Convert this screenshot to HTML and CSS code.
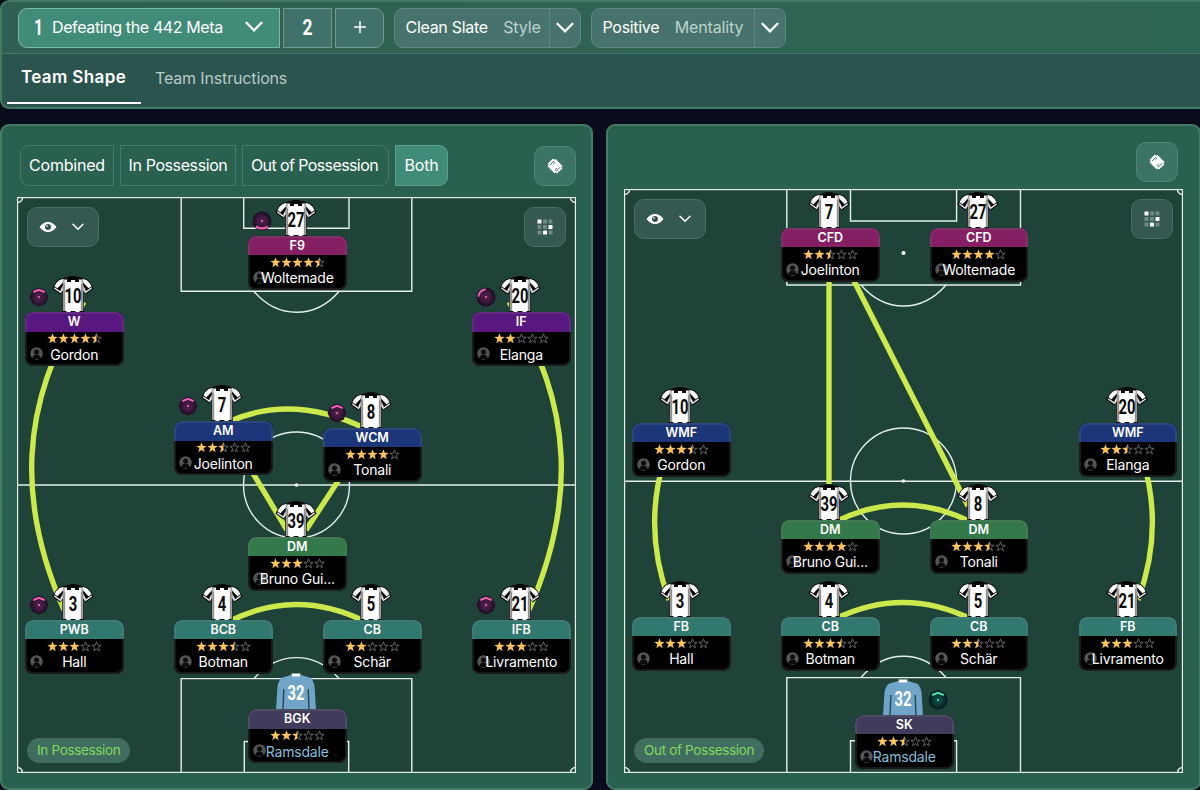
FILE: index.html
```html
<!DOCTYPE html>
<html lang="en">
<head>
  <meta charset="utf-8">
  <title>Team Shape</title>
  <link rel="stylesheet" href="styles.css">
</head>
<body>

<svg class="defs" width="0" height="0" aria-hidden="true">
  <defs>
    <linearGradient id="shade" x1="0" x2="1" y1="0" y2="0">
      <stop offset="0" stop-color="#8d8d8d"/>
      <stop offset=".16" stop-color="#fff"/>
      <stop offset=".84" stop-color="#fff"/>
      <stop offset="1" stop-color="#8d8d8d"/>
    </linearGradient>
    <radialGradient id="duty-pink">
      <stop offset="0" stop-color="#5a2150"/>
      <stop offset=".6" stop-color="#38173a"/>
      <stop offset="1" stop-color="#170c20"/>
    </radialGradient>
    <radialGradient id="duty-green">
      <stop offset="0" stop-color="#12594d"/>
      <stop offset=".6" stop-color="#0b3431"/>
      <stop offset="1" stop-color="#061c1d"/>
    </radialGradient>
    <clipPath id="left-half"><rect width="5.5" height="11"/></clipPath>
  </defs>

  <symbol id="chevron" viewBox="0 0 18 12">
    <path d="M1.5 1.8 9 9.3l7.500-7.500" fill="none" stroke="currentColor" stroke-width="2.300" stroke-linecap="round"/>
  </symbol>

  <symbol id="eye" viewBox="0 0 18 12">
    <path d="M.5 6C3 2.500 5.800 1 9 1s6 1.500 8.500 5C15 9.500 12.200 11 9 11S3 9.500.5 6Z" fill="#fff"/>
    <circle cx="9" cy="6" r="3" fill="#35564f"/>
    <circle cx="8" cy="5" r="1" fill="#b9c8c5"/>
  </symbol>

  <symbol id="grid" viewBox="0 0 16 16">
    <g fill="#6f8a84">
      <rect x="6" y=".5" width="4" height="4" rx=".7"/><rect x="11.500" y=".5" width="4" height="4" rx=".7"/>
      <rect x=".5" y="6" width="4" height="4" rx=".7"/><rect x="6" y="6" width="4" height="4" rx=".7"/>
      <rect x=".5" y="11.500" width="4" height="4" rx=".7"/><rect x="11.500" y="11.500" width="4" height="4" rx=".7"/>
    </g>
    <g fill="#fff">
      <rect x=".5" y=".5" width="4" height="4" rx=".5"/><rect x="11.500" y="6" width="4" height="4" rx=".5"/><rect x="6" y="11.500" width="4" height="4" rx=".5"/>
    </g>
  </symbol>

  <symbol id="ticket" viewBox="0 0 16 16">
    <path d="M6 .6 7.200 1.800 8.600 1l6.900 7-1 1.200.9 1.400L10 15.600l-1.300-1.200-1.300.8L.5 8.200l1.200-1.300L.6 5.700Z" fill="#fff"/>
    <path d="M3 7 6.700 3.300l1.200 1.200-1.700 1.700M13.200 9.200 9.500 12.900 8.200 11.600l1.700-1.700" fill="none" stroke="#3b7365" stroke-width="1"/>
  </symbol>

  <symbol id="person" viewBox="0 0 13 13">
    <circle cx="6.500" cy="6.500" r="6.200" fill="#555"/>
    <circle cx="6.500" cy="5" r="2.500" fill="#0c0c0c"/>
    <path d="M2.300 12c.2-3 1.800-4.400 4.200-4.400s4 1.400 4.200 4.400Z" fill="#0c0c0c"/>
  </symbol>

  <symbol id="star-on" viewBox="0 0 11 11">
    <path d="m5.500.2 1.300 3.600 3.900.1-3.100 2.400 1.100 3.900-3.200-2.200-3.200 2.200 1.100-3.900L.3 3.900l3.900-.1Z" fill="#fcc45a"/>
  </symbol>
  <symbol id="star-off" viewBox="0 0 11 11">
    <path d="m5.500.8 1.200 3.400 3.500.1-2.800 2.100 1 3.400-2.900-2-2.900 2 1-3.400L.8 4.300l3.500-.1Z" fill="none" stroke="#77777d" stroke-width=".8"/>
  </symbol>
  <symbol id="star-half" viewBox="0 0 11 11">
    <use href="#star-off"/>
    <use href="#star-on" clip-path="url(#left-half)"/>
  </symbol>

  <symbol id="shirt" viewBox="0 0 42 37">
    <path d="M15 1 6.500 3.500Q4 5.500.4 12.500l7.800 6 2-2.800V37h21.600V15.700l2 2.800 7.800-6Q38 5.500 35.500 3.500L27 1Q21-.5 15 1Z" fill="#0c0c0c"/>
    <path d="M11.500 2.800 7.200 4.200Q4.600 6 2.500 10.200l3 2.100 6-6.500ZM30.500 2.800l4.300 1.400q2.600 1.800 4.700 6l-3 2.100-6-6.500Z" fill="#fff"/>
    <path d="M8.400 14.300 10.800 9.500v4.700L8.600 17.300 2 12.500l.6-1.300 5.800 4.200ZM33.600 14.300 31.200 9.500v4.700l2.200 3.100 6.600-4.800-.6-1.300-5.800 4.200Z" fill="#f1f1f1"/>
    <path d="M10.800 3.500H15V6h4V4h4v2h4V3.500h4.200V35H27.500v1.500h-4V35h-5v1.500h-4V35h-3.700Z" fill="url(#shade)"/>
    <path d="M16.500 1q4.500-1.500 9 0l-2 2.700h-5Z" fill="#000"/>
    <path d="M12.300 8v27M29.700 8v27" stroke="#666" stroke-width=".7"/>
  </symbol>

  <symbol id="shirt-gk" viewBox="0 0 42 37">
    <path d="M16 2 7.500 4.500Q4 6 2.500 13L1 37h40l-1.500-24Q38 6 34.500 4.500L26 2Z" fill="#70a5c8"/>
    <path d="M8.800 16 8 37M33.200 16 34 37" stroke="#244551" stroke-width="1.400"/>
    <path d="M16.500.5h9l-.5 3h-8Z" fill="#fff"/>
  </symbol>

  <symbol id="duty-support" viewBox="0 0 20 20">
    <path d="m10 .5 6.500 2.700 2.900 6.800-2.900 6.800L10 19.500l-6.500-2.700L.6 10l2.900-6.800Z" fill="url(#duty-pink)"/>
    <path d="M5 4.800 10 2.900l5 1.900" fill="none" stroke="#ee62b0" stroke-width="2" stroke-linecap="round"/>
    <circle cx="10" cy="10" r="1" fill="#f176bb"/>
  </symbol>
  <symbol id="duty-deep" viewBox="0 0 20 20">
    <circle cx="10" cy="10" r="9.500" fill="url(#duty-pink)"/>
    <path d="M4.800 16q5.200 2.800 10.400 0" fill="none" stroke="#ee62b0" stroke-width="2.200" stroke-linecap="round"/>
    <circle cx="10" cy="10" r="1" fill="#f176bb"/>
  </symbol>
  <symbol id="duty-inside" viewBox="0 0 20 20">
    <circle cx="10" cy="10" r="9.500" fill="url(#duty-pink)"/>
    <path d="M2.500 9Q3.500 3.500 9 2.500" fill="none" stroke="#ee62b0" stroke-width="1.800" stroke-linecap="round"/>
    <circle cx="10" cy="10" r="1" fill="#f176bb"/>
  </symbol>
  <symbol id="duty-keeper" viewBox="0 0 20 20">
    <circle cx="10" cy="10" r="9.500" fill="url(#duty-green)"/>
    <path d="M5 4.800 10 2.800l5 2" fill="none" stroke="#4ee0ac" stroke-width="2" stroke-linecap="round"/>
    <circle cx="10" cy="10" r="1" fill="#5fe3b8"/>
  </symbol>
</svg>

<header class="topbar">
  <div class="tactics">
    <div class="slots">
      <button class="slot slot-active">
        <svg class="slot-num" width="12" height="34"><text x="1" y="24.500" textLength="9" lengthAdjust="spacingAndGlyphs">1</text></svg>
        <span class="slot-name">Defeating the 442 Meta</span>
        <svg class="chevron"><use href="#chevron"/></svg>
      </button>
      <button class="slot slot-two">
        <svg class="slot-num" width="14" height="34"><text x="1.500" y="24.500" textLength="10" lengthAdjust="spacingAndGlyphs">2</text></svg>
      </button>
      <button class="slot slot-add">
        <svg width="12" height="12" viewBox="0 0 12 12"><path d="M6 0v12M0 6h12" stroke="#fff" stroke-width="1.500"/></svg>
      </button>
    </div>
    <button class="picker picker-style">
      <span class="picker-value">Clean Slate</span>
      <span class="picker-label">Style</span>
      <span class="picker-arrow"><svg class="chevron"><use href="#chevron"/></svg></span>
    </button>
    <button class="picker picker-mentality">
      <span class="picker-value">Positive</span>
      <span class="picker-label">Mentality</span>
      <span class="picker-arrow"><svg class="chevron"><use href="#chevron"/></svg></span>
    </button>
  </div>
  <nav class="tabs">
    <a class="tab tab-active">Team Shape</a>
    <a class="tab">Team Instructions</a>
  </nav>
</header>

<main class="panels">
  <section class="panel">
    <div class="panel-head">
      <div class="views">
        <button class="view view-combined">Combined</button>
        <button class="view view-in">In Possession</button>
        <button class="view view-out">Out of Possession</button>
        <button class="view view-both">Both</button>
      </div>
      <button class="square"><svg width="16" height="16"><use href="#ticket"/></svg></button>
    </div>
    <div class="pitch pitch-in" id="in-possession">
      <svg class="lines" viewBox="17 197 559 576">
        <g class="markings">
          <rect x="17.500" y="197.500" width="558" height="575"/>
          <path d="M17 485H576M181.200 197V291.200H411.800V197M243.700 197V228.300H349V197M181.200 773V678.600H411.800V773M244.300 773V741.500H348.700V773"/>
          <circle cx="296.500" cy="485" r="53"/>
          <path d="M254 291.500Q272 312.300 296.500 312.300T339 291.500M254 678.500Q272 657.600 296.500 657.600T339 678.500"/>
          <path d="M22.500 197.500a5 5 0 0 1-5 5M570.500 197.500a5 5 0 0 0 5 5M17.500 767.500a5 5 0 0 1 5 5M575.500 767.500a5 5 0 0 0-5 5"/>
        </g>
        <circle cx="296.500" cy="485" r="1.800" fill="#fff"/>
        <g class="links">
          <path d="M84 302C18 405 18 505 64 610M509 302C575 405 575 505 529 610"/>
          <path d="M228 422Q293 393 366 429M251 470 287 530M344 472 306 530M228 622Q296 587 366 622"/>
        </g>
      </svg>
      <button class="eye-menu"><svg width="18" height="12"><use href="#eye"/></svg><svg class="chevron-sm"><use href="#chevron"/></svg></button>
      <button class="square grid-menu"><svg width="16" height="16"><use href="#grid"/></svg></button>
      <span class="phase">In Possession</span>
    </div>
  </section>

  <section class="panel">
    <div class="panel-head panel-head-out">
      <button class="square"><svg width="16" height="16"><use href="#ticket"/></svg></button>
    </div>
    <div class="pitch pitch-out" id="out-of-possession">
      <svg class="lines" viewBox="624 189 559 584">
        <g class="markings">
          <rect x="624.500" y="189.500" width="558" height="583"/>
          <path d="M624 481.200H1183M786.800 189V285H1020.500V189M850.500 189V221H956.600V189M786.800 773V677.600H1020.500V773M850.500 773V740.700H956.600V773"/>
          <circle cx="903.500" cy="481" r="53"/>
          <path d="M861 285Q879 306 903.500 306T946 285M861 677.500Q879 656.200 903.500 656.200T946 677.500"/>
          <path d="M629.500 189.500a5 5 0 0 1-5 5M1177.500 189.500a5 5 0 0 0 5 5M624.500 767.500a5 5 0 0 1 5 5M1182.500 767.500a5 5 0 0 0-5 5"/>
        </g>
        <circle cx="903.500" cy="481" r="1.800" fill="#fff"/>
        <circle cx="903.500" cy="253" r="2" fill="#fff"/>
        <g class="links">
          <path d="M829 275V490M851 275 968 506"/>
          <path d="M664 460Q643 530 669 600M1143 460Q1164 530 1138 600"/>
          <path d="M835 522Q903 488 971 522M835 619Q903 586 971 619"/>
        </g>
      </svg>
      <button class="eye-menu"><svg width="18" height="12"><use href="#eye"/></svg><svg class="chevron-sm"><use href="#chevron"/></svg></button>
      <button class="square grid-menu"><svg width="16" height="16"><use href="#grid"/></svg></button>
      <span class="phase">Out of Possession</span>
    </div>
  </section>
</main>

<script src="script.js"></script>
</body>
</html>
```
FILE: styles.css
```css
* {
    box-sizing: border-box;
}

body {
    margin: 0;
    height: 790px;
    overflow: hidden;
    background: #090c1b;
    color: #fff;
    font: 16px/20px Inter, "Liberation Sans", sans-serif;
}

button {
    margin: 0;
    padding: 0;
    border: 1.5px solid #5b897d;
    background: #41726a;
    color: inherit;
    font: inherit;
    display: flex;
    align-items: center;
    justify-content: center;
    white-space: nowrap;
}

svg {
    display: block;
    flex: none;
}

.defs {
    position: absolute;
}

/* top bar */

.topbar {
    height: 109px;
    border: 2px solid #437a63;
    border-right: 0;
    border-radius: 9px 0 0 9px;
    background: #2b544e;
    overflow: hidden;
}

.tactics {
    display: flex;
    gap: 10px;
    height: 52px;
    padding: 6px 16px 0;
    border-bottom: 1px solid #42776a;
    background: linear-gradient(90deg, #306053, #2f6554);
}

.slots {
    display: flex;
    gap: 3px;
}

.slot,
.picker {
    height: 40px;
    padding-bottom: 2px;
}

.slot-active {
    width: 262px;
    padding: 0 16px 2px 14px;
    justify-content: flex-start;
    border-color: #7bb5a3;
    border-radius: 9px 0 0 9px;
    background: #418b79;
}

.slot-num {
    font: bold 22px Roboto, sans-serif;
    fill: #fff;
    overflow: visible;
}

.slot-name {
    margin-left: 7px;
    flex: 1;
    text-align: left;
    letter-spacing: -.38px;
}

.slot-two {
    width: 49px;
    border-color: #72998f;
}

.slot-add {
    width: 49px;
    border-color: #72998f;
    border-radius: 0 9px 9px 0;
}

.chevron {
    width: 18px;
    height: 12px;
}

.chevron-sm {
    width: 12px;
    height: 8px;
}

.picker {
    justify-content: flex-start;
    border-radius: 9px;
    background: #48736c;
    padding: 0 0 0 10.5px;
}

.picker-style {
    width: 187px;
}

.picker-mentality {
    width: 195px;
}

.picker-value {
    padding-bottom: 2px;
    letter-spacing: -.3px;
}

.picker-label {
    margin-left: 15.5px;
    padding-bottom: 2px;
    color: #bcd3cf;
    letter-spacing: -.15px;
}

.picker-arrow {
    width: 31px;
    height: 100%;
    margin-left: auto;
    padding: 0 1px 1px 0;
    display: flex;
    align-items: center;
    justify-content: center;
    border-left: 1px solid #5b897d;
}

.tabs {
    display: flex;
    height: 50px;
    padding-left: 5px;
}

.tab {
    padding: 13px 14px 0;
    color: #b7cbc8;
    line-height: 22px;
    letter-spacing: -.15px;
}

.tab-active {
    width: 134px;
    padding-top: 12px;
    padding-right: 0;
    border-bottom: 2px solid #fff;
    color: #fff;
    font-size: 17px;
    font-weight: 600;
    letter-spacing: .38px;
    white-space: nowrap;
}

/* panels */

.panels {
    display: grid;
    grid-template-columns: 593px 595px;
    gap: 13px;
    margin-top: 15px;
}

.panel {
    height: 666px;
    padding: 0 15px;
    border: 2px solid #457c64;
    border-radius: 9px;
    background: #296050;
}

.panel-head {
    display: flex;
    align-items: center;
    justify-content: space-between;
    height: 71px;
    padding: 8px 0 0 3px;
}

.panel-head-out {
    height: 63px;
    padding-top: 8px;
    padding-right: 6px;
    justify-content: flex-end;
}

.views {
    display: flex;
    gap: 6px;
}

.view {
    height: 41px;
    padding-bottom: 1px;
    border-color: #447c69;
    background: none;
    letter-spacing: -.2px;
}

.view-combined {
    width: 94px;
    border-radius: 9px 0 0 9px;
}

.view-in {
    width: 116px;
    letter-spacing: -.4px;
}

.view-out {
    width: 147px;
    padding-right: 2px;
    border-radius: 0 9px 9px 0;
    letter-spacing: -.6px;
}

.view-both {
    width: 53px;
    border-color: #5aa08c;
    border-radius: 0 9px 9px 0;
    background: #418b79;
}

.square {
    width: 42px;
    height: 40px;
    border-color: #4d8676;
    border-radius: 10px;
    background: #3b7365;
}

/* pitch */

.pitch {
    position: relative;
    width: 559px;
    background: #1f4239;
}

.pitch-in {
    height: 576px;
}

.pitch-out {
    height: 584px;
    margin-left: 1px;
}

.lines {
    width: 100%;
    height: 100%;
}

.markings {
    fill: none;
    stroke: #e3f0ea;
    stroke-width: 1.4;
}

.links {
    fill: none;
    stroke: #cbe94c;
    stroke-width: 5.4;
}

.eye-menu {
    position: absolute;
    left: 10px;
    top: 10px;
    width: 72px;
    height: 40px;
    gap: 15px;
    padding: 0 4px 1px 0;
    border-color: #4b6d67;
    border-radius: 10px;
    background: #355851;
}

.grid-menu {
    position: absolute;
    right: 10px;
    top: 10px;
    border-color: #4b6d67;
    background: #355851;
}

.phase {
    position: absolute;
    left: 10px;
    bottom: 10px;
    height: 25px;
    padding: 0 10px;
    border-radius: 13px;
    background: #416d60;
    color: #82da5b;
    font-size: 13.5px;
    line-height: 25px;
    letter-spacing: -.33px;
}

/* players */

.player {
    position: absolute;
    width: 98.5px;
}

.shirt {
    position: absolute;
    left: 27px;
    top: -36px;
    width: 42px;
    height: 37px;
}

.shirt text {
    font: bold 20px Roboto, sans-serif;
    fill: #0a0a0a;
}

.keeper .shirt text {
    fill: #fff;
}

.duty {
    position: absolute;
    left: 3.5px;
    top: -25px;
    width: 20px;
    height: 20px;
}

.keeper .duty {
    left: 73px;
}

.card {
    position: relative;
    height: 54px;
    border-radius: 8px;
    background: #000;
    overflow: hidden;
}

.card::after {
    content: "";
    position: absolute;
    inset: 0;
    border: 2.5px solid rgba(130, 130, 130, .2);
    border-radius: 8px;
}

.role {
    height: 19.5px;
    font-size: 12.5px;
    font-weight: 600;
    line-height: 20px;
    text-align: center;
}

.role-striker { background: #831f62; }
.role-winger { background: #591780; }
.role-midfield { background: #1b3779; }
.role-holding { background: #34794a; }
.role-defence { background: #31786e; }
.role-keeper { background: #413c5b; }

.stars {
    display: flex;
    justify-content: center;
    height: 14px;
    align-items: center;
}

.stars svg {
    width: 11px;
    height: 11px;
}

.person {
    position: absolute;
    left: 5px;
    top: 35px;
    width: 13px;
    height: 13px;
}

.name {
    position: relative;
    font-size: 14px;
    line-height: 18px;
    letter-spacing: -.2px;
    text-align: center;
}

.keeper .name {
    color: #86bfdd;
}
```
FILE: script.js
```js
// x and y are the top left corner of the card on its pitch
const inPossession = [
  {x: 231, y: 38.5, number: 27, role: 'F9', line: 'striker', stars: 4.5, name: 'Woltemade', duty: 'deep'},
  {x: 8, y: 115, number: 10, role: 'W', line: 'winger', stars: 4.5, name: 'Gordon', duty: 'support'},
  {x: 455, y: 115, number: 20, role: 'IF', line: 'winger', stars: 2, name: 'Elanga', duty: 'inside'},
  {x: 157, y: 224, number: 7, role: 'AM', line: 'midfield', stars: 2.5, name: 'Joelinton', duty: 'support'},
  {x: 306, y: 230.5, number: 8, role: 'WCM', line: 'midfield', stars: 4, name: 'Tonali', duty: 'support'},
  {x: 231, y: 339.5, number: 39, role: 'DM', line: 'holding', stars: 3, name: 'Bruno Gui...'},
  {x: 8, y: 422.5, number: 3, role: 'PWB', line: 'defence', stars: 3, name: 'Hall', duty: 'support'},
  {x: 157, y: 422.5, number: 4, role: 'BCB', line: 'defence', stars: 3.5, name: 'Botman'},
  {x: 306, y: 422.5, number: 5, role: 'CB', line: 'defence', stars: 2, name: 'Schär'},
  {x: 455, y: 422.5, number: 21, role: 'IFB', line: 'defence', stars: 3, name: 'Livramento', duty: 'support'},
  {x: 231, y: 512, number: 32, role: 'BGK', line: 'keeper', stars: 2.5, name: 'Ramsdale'},
]

const outOfPossession = [
  {x: 157, y: 38.5, number: 7, role: 'CFD', line: 'striker', stars: 2.5, name: 'Joelinton'},
  {x: 305.5, y: 38.5, number: 27, role: 'CFD', line: 'striker', stars: 4, name: 'Woltemade'},
  {x: 8, y: 233.5, number: 10, role: 'WMF', line: 'midfield', stars: 3.5, name: 'Gordon'},
  {x: 454.5, y: 233.5, number: 20, role: 'WMF', line: 'midfield', stars: 2.5, name: 'Elanga'},
  {x: 157, y: 330.5, number: 39, role: 'DM', line: 'holding', stars: 4, name: 'Bruno Gui...'},
  {x: 305.5, y: 330.5, number: 8, role: 'DM', line: 'holding', stars: 3.5, name: 'Tonali'},
  {x: 8, y: 427.5, number: 3, role: 'FB', line: 'defence', stars: 3, name: 'Hall'},
  {x: 157, y: 427.5, number: 4, role: 'CB', line: 'defence', stars: 3.5, name: 'Botman'},
  {x: 305.5, y: 427.5, number: 5, role: 'CB', line: 'defence', stars: 2.5, name: 'Schär'},
  {x: 454.5, y: 427.5, number: 21, role: 'FB', line: 'defence', stars: 3, name: 'Livramento'},
  {x: 231, y: 525.5, number: 32, role: 'SK', line: 'keeper', stars: 2.5, name: 'Ramsdale', duty: 'keeper'},
]

function stars(rating) {
  let html = ''
  for (let i = 1; i <= 5; i++) {
    const kind = rating >= i ? 'on' : rating > i - 1 ? 'half' : 'off'
    html += `<svg><use href="#star-${kind}"/></svg>`
  }
  return html
}

function player(p) {
  const keeper = p.line === 'keeper'
  const width = p.number > 9 ? 17 : 8.5
  return `
    <div class="player ${keeper ? 'keeper' : ''}" style="left: ${p.x}px; top: ${p.y}px">
      <svg class="shirt" viewBox="0 0 42 37">
        <use href="#${keeper ? 'shirt-gk' : 'shirt'}"/>
        <text x="${21 - width / 2}" y="26.500" textLength="${width}" lengthAdjust="spacingAndGlyphs">${p.number}</text>
      </svg>
      ${p.duty ? `<svg class="duty"><use href="#duty-${p.duty}"/></svg>` : ''}
      <div class="card">
        <div class="role role-${p.line}">${p.role}</div>
        <div class="stars">${stars(p.stars)}</div>
        <svg class="person"><use href="#person"/></svg>
        <div class="name">${p.name}</div>
      </div>
    </div>`
}

function draw(id, players) {
  document.getElementById(id).insertAdjacentHTML('beforeend', players.map(player).join(''))
}

draw('in-possession', inPossession)
draw('out-of-possession', outOfPossession)
```
